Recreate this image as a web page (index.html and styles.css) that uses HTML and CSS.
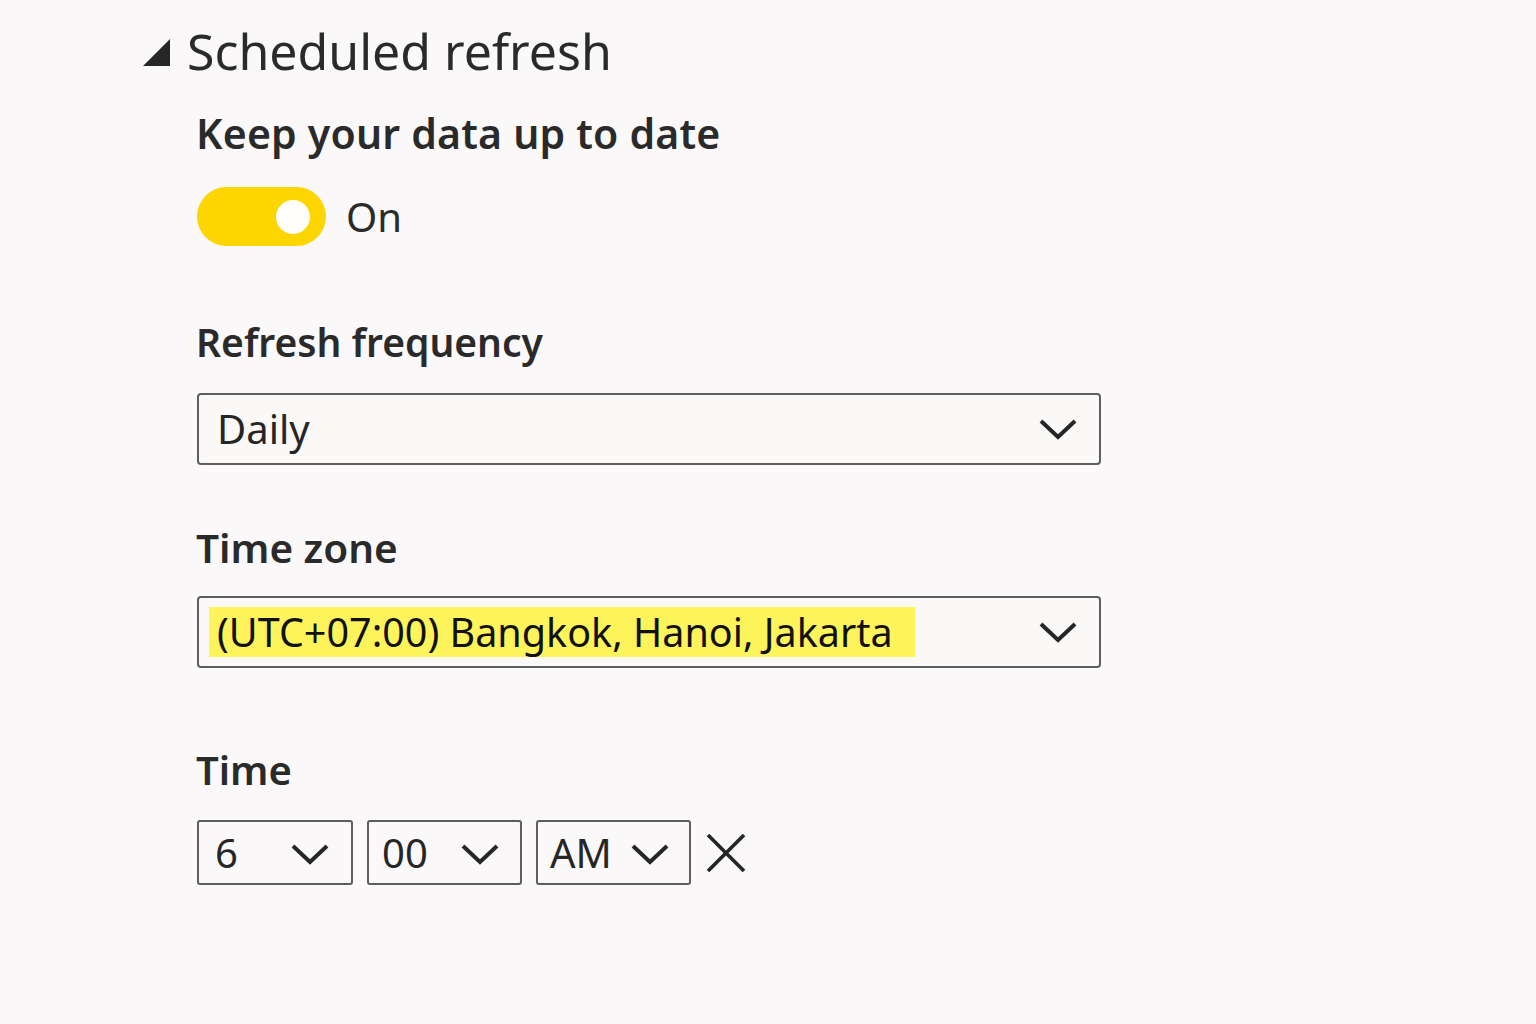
FILE: index.html
```html
<!DOCTYPE html>
<html lang="en">
<head>
<meta charset="utf-8">
<title>Scheduled refresh</title>
<link rel="stylesheet" href="styles.css">
</head>
<body>
<div class="page">
  <div class="section-head">
    <svg class="tri" width="28" height="27" viewBox="0 0 28 27"><polygon points="27,0 27,27 0,27" fill="#262626"/></svg>
    <span class="title">Scheduled refresh</span>
  </div>
  <div class="content">
    <div class="label keep">Keep your data up to date</div>
    <div class="toggle-row">
      <div class="toggle"><div class="knob"></div></div>
      <span class="toggle-text">On</span>
    </div>
    <div class="label freq">Refresh frequency</div>
    <div class="select">
      <span class="select-text">Daily</span>
      <svg class="chev" width="40" height="22" viewBox="0 0 40 22"><polyline points="3,3 20,19 37,3" fill="none" stroke="#262626" stroke-width="4"/></svg>
    </div>
    <div class="label tz">Time zone</div>
    <div class="select">
      <span class="select-text hl">(UTC+07:00) Bangkok, Hanoi, Jakarta</span>
      <svg class="chev" width="40" height="22" viewBox="0 0 40 22"><polyline points="3,3 20,19 37,3" fill="none" stroke="#262626" stroke-width="4"/></svg>
    </div>
    <div class="label time">Time</div>
    <div class="time-row">
      <div class="tbox hour">
        <span class="tval">6</span>
        <svg class="chev-s" width="40" height="22" viewBox="0 0 40 22"><polyline points="3,3 20,19 37,3" fill="none" stroke="#262626" stroke-width="4"/></svg>
      </div>
      <div class="tbox">
        <span class="tval">00</span>
        <svg class="chev-s" width="40" height="22" viewBox="0 0 40 22"><polyline points="3,3 20,19 37,3" fill="none" stroke="#262626" stroke-width="4"/></svg>
      </div>
      <div class="tbox ampm">
        <span class="tval">AM</span>
        <svg class="chev-s" width="40" height="22" viewBox="0 0 40 22"><polyline points="3,3 20,19 37,3" fill="none" stroke="#262626" stroke-width="4"/></svg>
      </div>
      <svg class="close" width="40" height="38" viewBox="0 0 40 38"><path d="M2,1 L38,37 M38,1 L2,37" stroke="#262626" stroke-width="3.6" fill="none"/></svg>
    </div>
  </div>
</div>
</body>
</html>
```

FILE: styles.css
```css
html, body {
  margin: 0;
  padding: 0;
  background: #faf8f8;
}
body {
  width: 1536px;
  height: 1024px;
  overflow: hidden;
  font-family: "Noto Sans", "Open Sans", sans-serif;
  color: #262626;
}
.page {
  padding-top: 21px;
}
.section-head {
  display: flex;
  align-items: center;
  height: 60px;
  padding-left: 143px;
}
.tri {
  margin-top: 2px;
  margin-right: 16px;
}
.title {
  font-size: 50px;
  line-height: 60px;
  font-weight: 400;
  color: #2a2a2a;
}
.content {
  padding-left: 197px;
  display: flex;
  flex-direction: column;
  align-items: flex-start;
}
.label {
  font-size: 40px;
  line-height: 50px;
  font-weight: 600;
  color: #2a2a2a;
  margin-left: -1px;
}
.keep {
  margin-top: 27px;
  font-size: 41px;
  letter-spacing: 0.2px;
}
.toggle-row {
  margin-top: 29px;
  display: flex;
  align-items: center;
}
.toggle {
  width: 129px;
  height: 59px;
  border-radius: 30px;
  background: #fdd500;
  display: flex;
  align-items: center;
  justify-content: flex-end;
  box-sizing: border-box;
  padding-right: 16px;
}
.knob {
  width: 34px;
  height: 34px;
  border-radius: 50%;
  background: #fffefc;
}
.toggle-text {
  margin-left: 20px;
  font-size: 40px;
  line-height: 50px;
  color: #2a2a2a;
}
.freq {
  margin-top: 71px;
  font-size: 39px;
}
.select {
  margin-top: 26px;
  width: 904px;
  height: 72px;
  box-sizing: border-box;
  border: 2px solid #5e5e5e;
  border-radius: 4px;
  display: flex;
  align-items: center;
  justify-content: space-between;
  padding: 0 21px 0 18px;
  background: #faf9f8;
}
.select-text {
  font-size: 40px;
  line-height: 50px;
  color: #262626;
}
.hl {
  font-size: 39.5px;
  background: #fdf45c;
  color: #111;
  padding: 0 22px 0 8px;
  margin-left: -8px;
}
.tz {
  margin-top: 58px;
  font-size: 40.5px;
}
.tz + .select { margin-top: 23px; }
.time { margin-top: 77px; }
.time-row {
  margin-top: 25px;
  display: flex;
  align-items: center;
  gap: 14px;
}
.tbox {
  width: 155px;
  height: 65px;
  box-sizing: border-box;
  border: 2px solid #5e5e5e;
  border-radius: 3px;
  display: flex;
  align-items: center;
  justify-content: space-between;
  padding: 0 20px 0 13px;
}
.tbox.hour {
  width: 156px;
  padding: 0 21px 0 16px;
}
.tbox.ampm { padding: 0 19px 0 12px; }
.tval {
  font-size: 40px;
  line-height: 50px;
  color: #262626;
}
.chev-s { margin-top: 2px; }
.close { margin-left: 1px; }
```
